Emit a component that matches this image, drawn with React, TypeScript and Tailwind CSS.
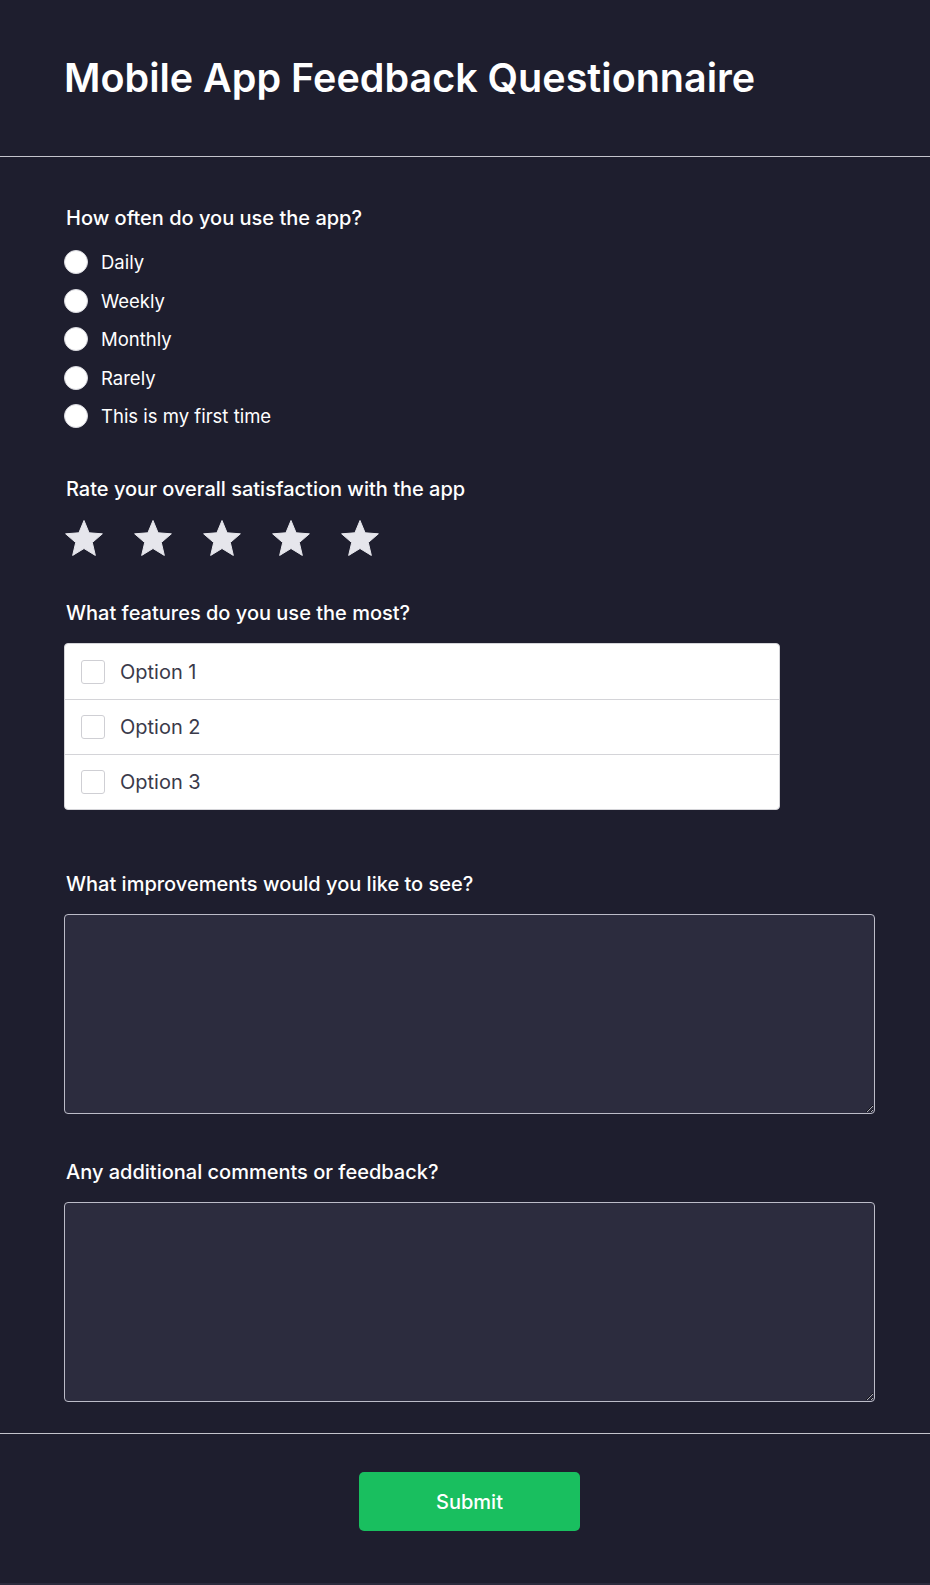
import React from "react";

function Star() {
  return (
    <svg width="40" height="40" viewBox="0 0 40 40" className="block">
      <polygon
        points="20,1.5 25.1,13.8 38.36,14.84 28.3,23.5 31.34,36.41 20,29.5 8.66,36.41 11.7,23.5 1.64,14.84 14.9,13.8"
        fill="#e6e6ec"
        stroke="#e6e6ec"
        strokeWidth="1"
        strokeLinejoin="round"
      />
    </svg>
  );
}

export default function App() {
  const freq = ["Daily", "Weekly", "Monthly", "Rarely", "This is my first time"];
  const opts = ["Option 1", "Option 2", "Option 3"];
  return (
    <div
      className="bg-[#2b2b3d] h-[1585px] text-white"
      style={{ fontFamily: "Inter, 'Noto Sans', sans-serif" }}
    >
      <div className="bg-[#1e1e2e] h-[1583px]">
        <header className="border-b border-[#c4c4cc] py-12 pl-16 pr-[55px]">
          <h1 className="text-[39.5px] leading-[60px] font-semibold text-white">
            Mobile App Feedback Questionnaire
          </h1>
        </header>

        <main className="pt-[47px] pb-[31px] pl-16 pr-[55px]">
          <section>
            <p className="text-xl leading-7 font-medium mb-4 pl-[2px]">How often do you use the app?</p>
            <div className="flex flex-col gap-[10.5px]">
              {freq.map((f) => (
                <label key={f} className="flex items-center gap-[13px] h-7">
                  <span className="w-6 h-6 rounded-full bg-white border border-[#d8d8de]" />
                  <span className="text-[18.5px] leading-7">{f}</span>
                </label>
              ))}
            </div>
          </section>

          <section className="mt-[45px]">
            <p className="text-xl leading-7 font-medium mb-4 pl-[2px]">Rate your overall satisfaction with the app</p>
            <div className="flex gap-[29px]">
              {[0, 1, 2, 3, 4].map((i) => (
                <Star key={i} />
              ))}
            </div>
          </section>

          <section className="mt-10">
            <p className="text-xl leading-7 font-medium mb-4 pl-[2px]">What features do you use the most?</p>
            <div className="w-[716px] bg-white rounded border border-[#d4d4d8] overflow-hidden">
              {opts.map((o, i) => (
                <div
                  key={o}
                  className={
                    "flex items-center gap-[15px] px-4 h-[55px] " +
                    (i > 0 ? "border-t border-[#d4d4d8]" : "")
                  }
                >
                  <span className="w-6 h-6 rounded-[3px] border border-[#cfcfd4] bg-white" />
                  <span className="text-xl text-[#3a3a4a]">{o}</span>
                </div>
              ))}
            </div>
          </section>

          <section className="mt-[60px]">
            <p className="text-xl leading-7 font-medium mb-4 pl-[2px]">What improvements would you like to see?</p>
            <textarea className="block w-full h-[200px] bg-[#2c2c3e] border border-[#bcbcc8] rounded text-white p-3" />
          </section>

          <section className="mt-[44px]">
            <p className="text-xl leading-7 font-medium mb-4 pl-[2px]">Any additional comments or feedback?</p>
            <textarea className="block w-full h-[200px] bg-[#2c2c3e] border border-[#bcbcc8] rounded text-white p-3" />
          </section>
        </main>

        <footer className="border-t border-[#c4c4cc] pt-[38px] pb-[50px] pl-16 pr-[55px] flex justify-center">
          <button className="w-[221px] h-[59px] rounded-[5px] bg-[#19bf5f] text-white text-xl font-medium">
            Submit
          </button>
        </footer>
      </div>
    </div>
  );
}
